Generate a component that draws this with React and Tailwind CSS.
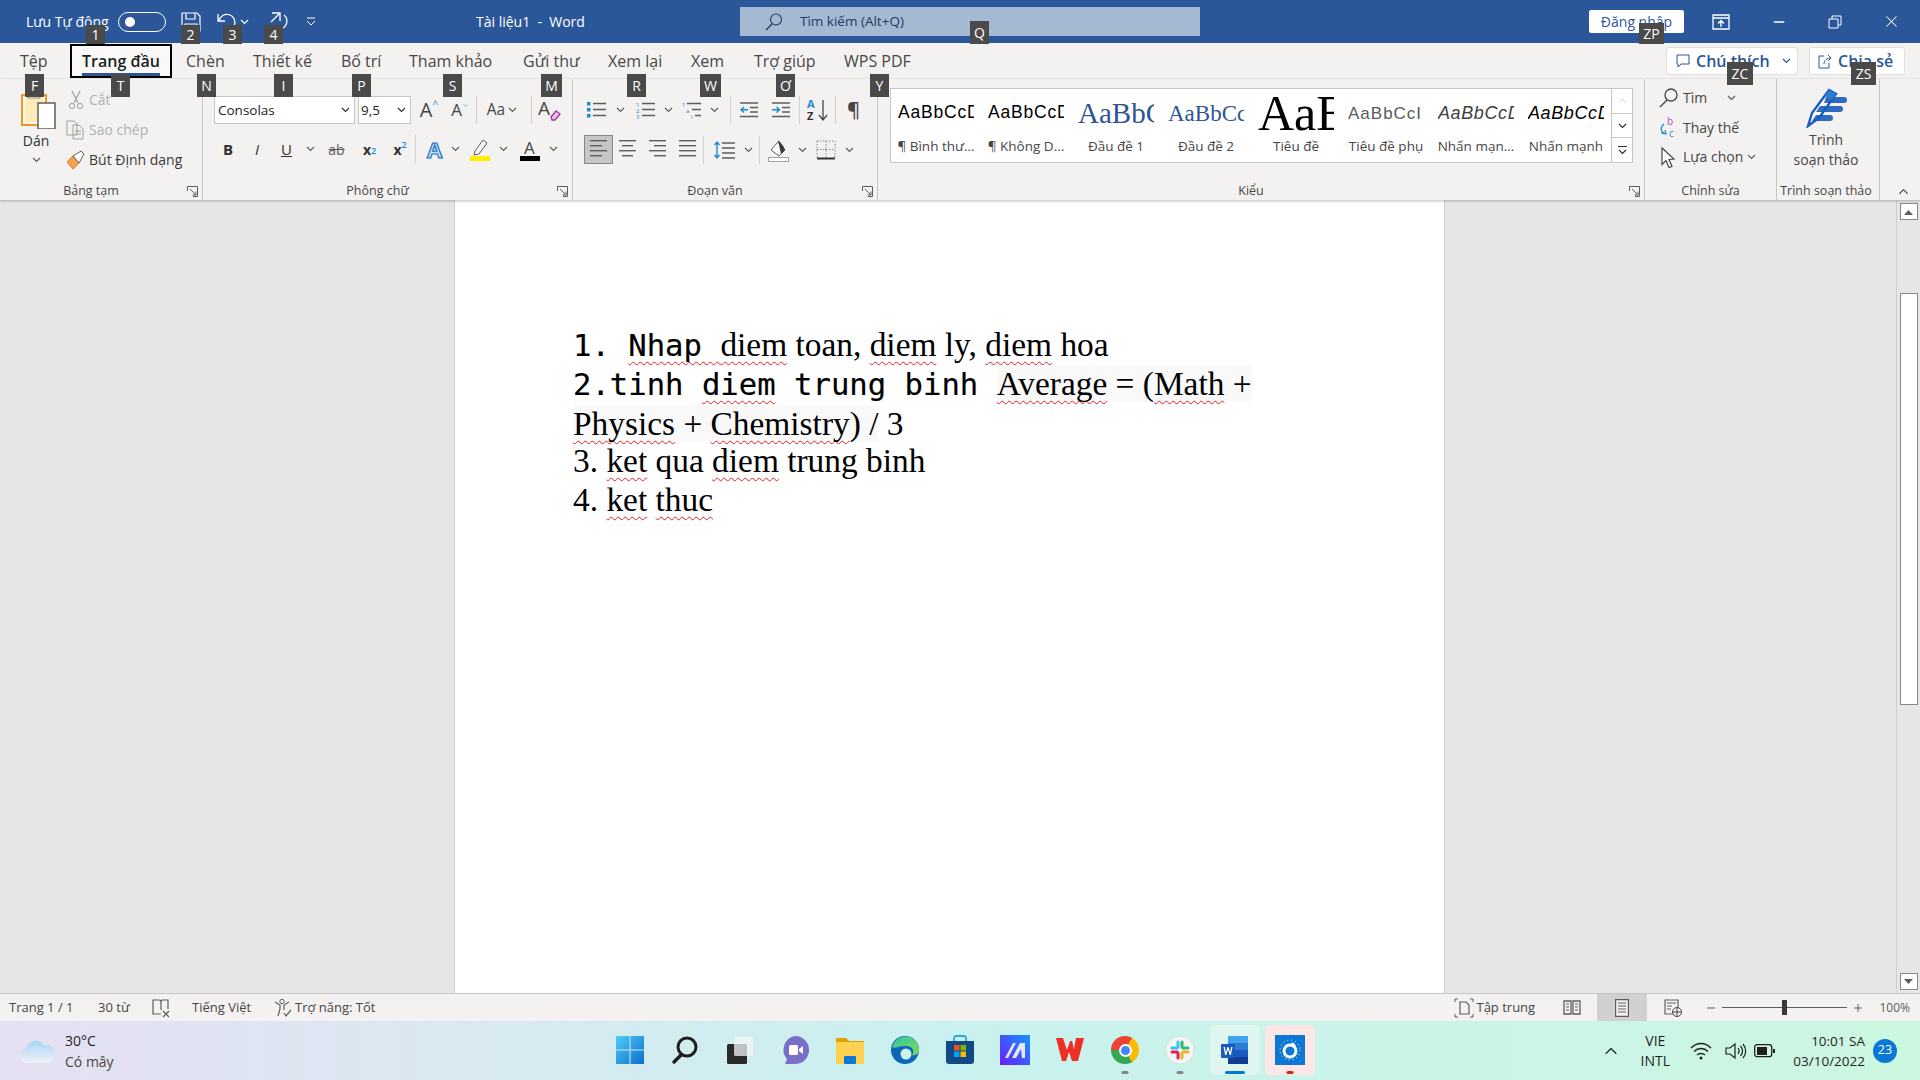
import { ChevronDown, ChevronUp, Minus, X, Plus } from 'lucide-react'

const ui = { fontFamily: '"Open Sans", sans-serif' }

const keyTips = [
  ['1', 'left-[86px] top-[25px] w-[19px] h-[19px]'],
  ['2', 'left-[181px] top-[25px] w-[19px] h-[19px]'],
  ['3', 'left-[223px] top-[25px] w-[19px] h-[19px]'],
  ['4', 'left-[264px] top-[25px] w-[19px] h-[19px]'],
  ['Q', 'left-[970px] top-[21px] w-[19px] h-[23px]'],
  ['ZP', 'left-[1639px] top-[23px] w-[25px] h-[21px]'],
  ['F', 'left-[25px] top-[74px] w-[19px] h-[23px]'],
  ['T', 'left-[111px] top-[74px] w-[19px] h-[23px]'],
  ['N', 'left-[197px] top-[74px] w-[19px] h-[23px]'],
  ['I', 'left-[274px] top-[74px] w-[19px] h-[23px]'],
  ['P', 'left-[352px] top-[74px] w-[19px] h-[23px]'],
  ['S', 'left-[443px] top-[74px] w-[19px] h-[23px]'],
  ['M', 'left-[541px] top-[74px] w-[21px] h-[23px]'],
  ['R', 'left-[627px] top-[74px] w-[19px] h-[23px]'],
  ['W', 'left-[700px] top-[74px] w-[21px] h-[23px]'],
  ['Ơ', 'left-[776px] top-[74px] w-[19px] h-[23px]'],
  ['Y', 'left-[870px] top-[74px] w-[19px] h-[23px]'],
  ['ZC', 'left-[1727px] top-[62px] w-[26px] h-[23px]'],
  ['ZS', 'left-[1851px] top-[62px] w-[25px] h-[23px]'],
]

const tabs = [
  ['Tệp', 'ml-[20px] w-[50px]'],
  ['Chèn', 'ml-[14px] w-[67px]'],
  ['Thiết kế', 'w-[88px]'],
  ['Bố trí', 'w-[68px]'],
  ['Tham khảo', 'w-[114px]'],
  ['Gửi thư', 'w-[85px]'],
  ['Xem lại', 'w-[83px]'],
  ['Xem', 'w-[63px]'],
  ['Trợ giúp', 'w-[90px]'],
  ['WPS PDF', 'w-[90px]'],
]

const styles = [
  { name: '¶ Bình thư...', text: 'AaBbCcD', cls: 'text-[17.5px] text-black tracking-[0.8px]', font: '"Liberation Sans", sans-serif' },
  { name: '¶ Không D...', text: 'AaBbCcD', cls: 'text-[17.5px] text-black tracking-[0.8px]', font: '"Liberation Sans", sans-serif' },
  { name: 'Đầu đề 1', text: 'AaBbC', cls: 'text-[29px] text-[#2f5496]', font: '"Liberation Serif", serif' },
  { name: 'Đầu đề 2', text: 'AaBbCc', cls: 'text-[23px] text-[#2f5496]', font: '"Liberation Serif", serif' },
  { name: 'Tiêu đề', text: 'AaB', cls: 'text-[50px] text-black', font: '"Liberation Serif", serif' },
  { name: 'Tiêu đề phụ', text: 'AaBbCcI', cls: 'text-[17px] text-[#5a5a5a] tracking-[1px]', font: '"Liberation Sans", sans-serif' },
  { name: 'Nhấn mạn...', text: 'AaBbCcD', cls: 'text-[18px] italic text-[#404040] tracking-[0.6px]', font: '"Liberation Sans", sans-serif' },
  { name: 'Nhấn mạnh', text: 'AaBbCcD', cls: 'text-[18px] italic text-black tracking-[0.6px]', font: '"Liberation Sans", sans-serif' },
]

function Chev({ className = 'text-[#605e5c]' }) {
  return (
    <svg width="9" height="6" viewBox="0 0 9 6" className={className}>
      <path d="M1 1l3.5 3.5L8 1" fill="none" stroke="currentColor" strokeWidth="1.2" />
    </svg>
  )
}

function Sep({ className = '' }) {
  return <div className={`w-px h-[28px] bg-[#d2d0ce] ${className}`} />
}

function Launcher() {
  return (
    <svg width="11" height="11" viewBox="0 0 11 11" className="text-[#605e5c]">
      <path d="M.5 5V.5H10.5V10.5H6M3 3l6 6M9 5.5V9H5.5" fill="none" stroke="currentColor" />
    </svg>
  )
}

function Lines({ rows, width = 20, gap = 5 }) {
  return (
    <svg width={width} height={rows.length * gap + 1} className="text-[#605e5c]">
      {rows.map(([a, b], i) => (
        <rect key={i} x={a} y={i * gap + 1} width={b - a} height="1.4" fill="currentColor" />
      ))}
    </svg>
  )
}

function Bullets() {
  return (
    <svg width="20" height="18" viewBox="0 0 20 18">
      <rect x="0" y="1" width="3.5" height="3.5" fill="#1b8ad3" />
      <rect x="0" y="7" width="3.5" height="3.5" fill="#1b8ad3" />
      <rect x="0" y="13" width="3.5" height="3.5" fill="#1b8ad3" />
      <path d="M6 2.5h13M6 8.5h13M6 14.5h13" stroke="#605e5c" strokeWidth="1.4" />
    </svg>
  )
}

function Numbers() {
  return (
    <svg width="20" height="18" viewBox="0 0 20 18">
      <text x="0" y="5.5" fontSize="6" fill="#1b8ad3" fontFamily="Open Sans">1</text>
      <text x="0" y="11.5" fontSize="6" fill="#1b8ad3" fontFamily="Open Sans">2</text>
      <text x="0" y="17.5" fontSize="6" fill="#1b8ad3" fontFamily="Open Sans">3</text>
      <path d="M6 2.5h13M6 8.5h13M6 14.5h13" stroke="#605e5c" strokeWidth="1.4" />
    </svg>
  )
}

function MultiLevel() {
  return (
    <svg width="20" height="18" viewBox="0 0 20 18">
      <text x="0" y="5.5" fontSize="6" fill="#1b8ad3" fontFamily="Open Sans">1</text>
      <text x="4" y="11.5" fontSize="6" fill="#1b8ad3" fontFamily="Open Sans">a</text>
      <text x="9" y="17.5" fontSize="6" fill="#1b8ad3" fontFamily="Open Sans">i</text>
      <path d="M5 2.5h14M10 8.5h9M13 14.5h6" stroke="#605e5c" strokeWidth="1.4" />
    </svg>
  )
}

function Indent({ inc }) {
  return (
    <svg width="20" height="16" viewBox="0 0 20 16">
      <path d="M1 1h18M11 5.5h8M11 10h8M1 14.5h18" stroke="#605e5c" strokeWidth="1.3" />
      {inc ? (
        <path d="M1 7.7h7M5.5 5l3 2.7-3 2.7" fill="none" stroke="#1b8ad3" strokeWidth="1.4" />
      ) : (
        <path d="M9 7.7H2M5 5L2 7.7l3 2.7" fill="none" stroke="#1b8ad3" strokeWidth="1.4" />
      )}
    </svg>
  )
}

function Clipboard() {
  return (
    <svg width="36" height="38" viewBox="0 0 36 38" className="ml-[5px]">
      <rect x="1" y="4" width="24" height="30" fill="#fff8e8" stroke="#e8962e" strokeWidth="2" />
      <rect x="4" y="7" width="18" height="24" fill="#fdebb8" />
      <rect x="7" y="0" width="12" height="7" fill="#fff" stroke="#8a8886" />
      <rect x="17" y="12" width="17" height="26" fill="#fff" stroke="#605e5c" strokeWidth="1.5" />
    </svg>
  )
}

function ClipboardGroup() {
  return (
    <Group className="w-[203px]" label="Bảng tạm">
      <div className="flex">
        <div className="w-[66px] flex flex-col items-center pl-[6px] pt-[12px]">
          <Clipboard />
          <div className="text-[14px] leading-[18px] mt-[3px] text-[#323130]">Dán</div>
          <div className="mt-[7px]"><Chev /></div>
        </div>
        <div className="flex flex-col pt-[6px] text-[14px] leading-[30px]">
          <div className="flex items-center h-[30px] text-[#b3b0ad]">
            <svg width="20" height="20" viewBox="0 0 20 20" className="mr-[3px]">
              <path d="M6 1l6 12M14 1L8 13" stroke="#a19f9d" strokeWidth="1.2" />
              <circle cx="6" cy="16" r="2.6" fill="none" stroke="#a19f9d" />
              <circle cx="14" cy="16" r="2.6" fill="none" stroke="#a19f9d" />
            </svg>
            Cắt
          </div>
          <div className="flex items-center h-[30px] text-[#b3b0ad]">
            <svg width="20" height="20" viewBox="0 0 20 20" className="mr-[3px]">
              <path d="M1 1h7l3 3v11H1zM7 5h6l4 4v10H7z" fill="#f3f2f1" stroke="#a19f9d" />
              <path d="M9 11h6M9 14h6" stroke="#a19f9d" />
            </svg>
            Sao chép
          </div>
          <div className="flex items-center h-[30px] text-[#3b3a39]">
            <svg width="20" height="20" viewBox="0 0 20 20" className="mr-[3px]">
              <path d="M1 12l6-6 6 7-6 6z" fill="#f7a24b" stroke="#d9762a" />
              <path d="M7 6l8-5 3 3-5 9z" fill="#fff" stroke="#605e5c" />
            </svg>
            Bút Định dạng
          </div>
        </div>
      </div>
    </Group>
  )
}

function Group({ className, label, children, launcher = true, sep = true }) {
  return (
    <div className={`relative flex flex-col h-full shrink-0 ${sep ? 'border-r border-[#c8c6c4]' : ''} ${className}`}>
      <div className="flex-1 min-h-0">{children}</div>
      <div className="flex items-center h-[18px]">
        <div className="flex-1 text-center text-[12.5px] leading-[16px] text-[#484644] whitespace-nowrap">{label}</div>
        {launcher && <div className="w-[20px] flex justify-center"><Launcher /></div>}
      </div>
    </div>
  )
}

function Cell({ className = '', children }) {
  return <div className={`flex items-center justify-center h-[28px] shrink-0 ${className}`}>{children}</div>
}

function FontGroup() {
  const serifA = { fontFamily: '"Open Sans", sans-serif' }
  return (
    <Group className="w-[370px]" label="Phông chữ">
      <div className="flex items-center pl-[11px] pt-[17px]">
        <div className="flex items-center justify-between w-[141px] h-[28px] bg-white border border-[#c8c6c4] pl-[3px] pr-[4px] text-[13.5px] text-[#201f1e]">
          Consolas <Chev className="text-[#323130]" />
        </div>
        <div className="ml-[3px] flex items-center justify-between w-[53px] h-[28px] bg-white border border-[#c8c6c4] pl-[2px] pr-[4px] text-[13.5px] text-[#201f1e]">
          9,5 <Chev className="text-[#323130]" />
        </div>
        <Cell className="w-[32px] ml-[2px] text-[20px] text-[#484644] relative" >
          <span style={serifA}>A</span><span className="text-[#1b8ad3] text-[10px] -mt-[12px]">^</span>
        </Cell>
        <Cell className="w-[30px] text-[17px] text-[#484644]">
          <span style={serifA}>A</span><span className="-mt-[10px]"><ChevronDown size={7} className="text-[#1b8ad3]" /></span>
        </Cell>
        <Sep className="ml-[1px]" />
        <Cell className="w-[50px] gap-[3px] text-[15.5px] text-[#484644]">Aa <Chev /></Cell>
        <Sep className="ml-[4px]" />
        <Cell className="w-[33px]">
          <svg width="24" height="24" viewBox="0 0 24 24">
            <text x="1" y="17" fontSize="19" fill="#484644" fontFamily="Open Sans">A</text>
            <path d="M14 19l5-6 4 3-5 6h-3z" fill="#e6c6ea" stroke="#a6359f" strokeWidth="1.3" />
          </svg>
        </Cell>
      </div>
      <div className="flex items-center pl-[11px] mt-[11px]">
        <Cell className="w-[28px] text-[15px] font-bold text-[#323130]">B</Cell>
        <Cell className="w-[30px] text-[15px] italic text-[#323130]" >I</Cell>
        <Cell className="w-[29px] text-[15px] underline text-[#323130]">U</Cell>
        <Cell className="w-[18px]"><Chev /></Cell>
        <Cell className="w-[35px] text-[14px] line-through text-[#605e5c]">ab</Cell>
        <Cell className="w-[31px] text-[14px] font-bold text-[#323130]">x<sub className="text-[#1b8ad3] text-[9px] font-semibold">2</sub></Cell>
        <Cell className="w-[30px] text-[14px] font-bold text-[#323130]">x<sup className="text-[#1b8ad3] text-[9px] font-semibold">2</sup></Cell>
        <Sep />
        <Cell className="w-[31px] ml-[3px]">
          <span className="text-[22px] font-bold leading-none text-[#bfe0f5] [-webkit-text-stroke:1.2px_#1b6fc2]">A</span>
        </Cell>
        <Cell className="w-[10px]"><Chev /></Cell>
        <Cell className="w-[33px] ml-[3px]">
          <svg width="24" height="24" viewBox="0 0 24 24">
            <path d="M7 14l8-11 4 3-8 11-5 1z" fill="#f3f2f1" stroke="#605e5c" />
            <rect x="2" y="19" width="20" height="5" fill="#ffee00" />
          </svg>
        </Cell>
        <Cell className="w-[14px]"><Chev /></Cell>
        <Cell className="w-[34px] ml-[3px] relative">
          <svg width="24" height="24" viewBox="0 0 24 24">
            <text x="6" y="17" fontSize="17" fill="#484644" fontFamily="Open Sans">A</text>
            <rect x="2" y="19" width="20" height="5" fill="#000" />
          </svg>
        </Cell>
        <Cell className="w-[12px]"><Chev /></Cell>
      </div>
    </Group>
  )
}

function ParagraphGroup() {
  return (
    <Group className="w-[305px]" label="Đoạn văn">
      <div className="flex items-center pl-[13px] pt-[17px]">
        <Cell className="w-[22px]"><Bullets /></Cell>
        <Cell className="w-[24px]"><Chev /></Cell>
        <Cell className="w-[27px]"><Numbers /></Cell>
        <Cell className="w-[19px]"><Chev /></Cell>
        <Cell className="w-[28px]"><MultiLevel /></Cell>
        <Cell className="w-[16px]"><Chev /></Cell>
        <Sep className="ml-[8px]" />
        <Cell className="w-[35px]"><Indent /></Cell>
        <Cell className="w-[29px]"><Indent inc /></Cell>
        <Sep className="ml-[4px]" />
        <Cell className="w-[35px]">
          <svg width="24" height="24" viewBox="0 0 24 24">
            <text x="1" y="10" fontSize="11" fontWeight="700" fill="#1b8ad3" fontFamily="Open Sans">A</text>
            <text x="1" y="22" fontSize="11" fontWeight="700" fill="#323130" fontFamily="Open Sans">Z</text>
            <path d="M17 2v19M13 17l4 5 4-5" fill="none" stroke="#484644" strokeWidth="1.3" />
          </svg>
        </Cell>
        <Sep />
        <Cell className="w-[35px] text-[20px] font-semibold text-[#484644]">¶</Cell>
      </div>
      <div className="flex items-center pl-[11px] mt-[11px]">
        <Cell className="w-[29px] h-[29px] bg-[#c8c6c4] border border-[#8a8886]">
          <Lines rows={[[0, 17], [0, 12], [0, 17], [0, 12]]} width={18} gap={5} />
        </Cell>
        <Cell className="w-[30px]"><Lines rows={[[0, 17], [3, 14], [0, 17], [3, 14]]} width={18} /></Cell>
        <Cell className="w-[30px]"><Lines rows={[[0, 17], [5, 17], [0, 17], [5, 17]]} width={18} /></Cell>
        <Cell className="w-[30px]"><Lines rows={[[0, 17], [0, 17], [0, 17], [0, 17]]} width={18} /></Cell>
        <Sep />
        <Cell className="w-[32px] ml-[5px]">
          <svg width="22" height="20" viewBox="0 0 22 20">
            <path d="M3 2v16M.5 5L3 2l2.5 3M.5 15L3 18l2.5-3" fill="none" stroke="#1b8ad3" strokeWidth="1.4" />
            <path d="M8 3h13M8 8h13M8 13h13M8 18h13" stroke="#605e5c" strokeWidth="1.4" />
          </svg>
        </Cell>
        <Cell className="w-[14px]"><Chev /></Cell>
        <Sep className="ml-[4px]" />
        <Cell className="w-[33px] ml-[2px]">
          <svg width="22" height="24" viewBox="0 0 22 24">
            <path d="M3 12l7-8 7 8-6 6z" fill="#fff" stroke="#605e5c" />
            <path d="M10 2c3 3 6 6 7 10l-4 4z" fill="#3b3a39" />
            <rect x=".5" y="19.5" width="20" height="4" fill="#fff" stroke="#a19f9d" />
          </svg>
        </Cell>
        <Cell className="w-[14px]"><Chev /></Cell>
        <Cell className="w-[33px]">
          <svg width="20" height="20" viewBox="0 0 20 20">
            <path d="M1 1h18M1 1v17M19 1v17M10 1v17M1 9.5h18" stroke="#8a8886" strokeDasharray="1.5 1.5" fill="none" />
            <path d="M1 18.5h18" stroke="#323130" strokeWidth="2" />
          </svg>
        </Cell>
        <Cell className="w-[14px]"><Chev /></Cell>
      </div>
    </Group>
  )
}

function StylesGroup() {
  return (
    <Group className="w-[767px]" label="Kiểu">
      <div className="pl-[12px] pt-[9px]">
        <div className="flex w-[743px] h-[75px] bg-white border border-[#c8c6c4]">
          {styles.map((s) => (
            <div key={s.name} className="w-[90px] shrink-0 flex flex-col items-center">
              <div className="w-[76px] h-[48px] overflow-hidden flex items-center justify-start whitespace-nowrap">
                <span className={`leading-none ${s.cls}`} style={{ fontFamily: s.font }}>{s.text}</span>
              </div>
              <div className="text-[13.5px] leading-[18px] text-[#484644] whitespace-nowrap">{s.name}</div>
            </div>
          ))}
          <div className="ml-auto w-[21px] flex flex-col border-l border-[#c8c6c4]">
            <div className="flex-1 flex items-center justify-center text-[#c8c6c4]"><ChevronUp size={11} /></div>
            <div className="flex-1 flex items-center justify-center border-y border-[#c8c6c4] text-[#323130]"><Chev className="text-[#323130]" /></div>
            <div className="flex-1 flex flex-col items-center justify-center text-[#323130]">
              <div className="w-[9px] h-px bg-[#323130] mb-[2px]" />
              <Chev className="text-[#323130]" />
            </div>
          </div>
        </div>
      </div>
    </Group>
  )
}

function EditingGroup() {
  return (
    <Group className="w-[132px]" label="Chỉnh sửa" launcher={false}>
      <div className="flex flex-col pt-[4px] pl-[13px] text-[14px] text-[#484644]">
        <div className="flex items-center h-[29.5px]">
          <svg width="22" height="22" viewBox="0 0 22 22">
            <circle cx="13" cy="8" r="6" fill="none" stroke="#484644" strokeWidth="1.3" />
            <path d="M9 13l-7 7" stroke="#484644" strokeWidth="1.5" />
          </svg>
          <span className="ml-[3px] w-[44px]">Tìm</span>
          <Chev />
        </div>
        <div className="flex items-center h-[29.5px]">
          <svg width="22" height="22" viewBox="0 0 22 22">
            <text x="9" y="9" fontSize="10" fill="#b146c2" fontFamily="Open Sans">b</text>
            <text x="11" y="21" fontSize="10" fill="#1b8ad3" fontFamily="Open Sans">c</text>
            <path d="M6 8C2 11 2 16 8 18M3 17l5 1-1-4" fill="none" stroke="#1b8ad3" strokeWidth="1.2" />
          </svg>
          <span className="ml-[3px]">Thay thế</span>
        </div>
        <div className="flex items-center h-[29.5px]">
          <svg width="22" height="22" viewBox="0 0 22 22">
            <path d="M4 2l12 11-5 .5 3 7-3 1-3-7-4 4z" fill="#fff" stroke="#484644" strokeWidth="1.2" />
          </svg>
          <span className="ml-[3px] mr-[4px]">Lựa chọn</span>
          <Chev />
        </div>
      </div>
    </Group>
  )
}

function EditorGroup() {
  return (
    <Group className="w-[103px] pr-[4px]" label="Trình soạn thảo" launcher={false}>
      <div className="flex flex-col items-center pt-[9px]">
        <svg width="42" height="40" viewBox="0 0 42 40">
          <path d="M3 38l4-13L24 2l7 4-17 24z" fill="#fff" stroke="#185abd" strokeWidth="2.4" />
          <path d="M21 9h18a2 2 0 010 6H19zM15 18h20a2 2 0 010 6H11zM11 27h14a2 2 0 010 6H7z" fill="#185abd" opacity=".9" />
          <path d="M24 2l7 4-4 6-7-4z" fill="#2b7cd3" />
        </svg>
        <div className="text-[14px] leading-[20px] mt-[2px] text-center text-[#484644]">Trình<br />soạn thảo</div>
      </div>
    </Group>
  )
}

function Sq({ children }) {
  return <span className="underline decoration-wavy decoration-[#ea1c24] decoration-1 underline-offset-[5px] [text-decoration-skip-ink:none]">{children}</span>
}

function Mono({ children }) {
  return <span className="text-[30.6px] [-webkit-text-stroke:0.2px_black]" style={{ fontFamily: '"DejaVu Sans Mono", monospace' }}>{children}</span>
}

function Document() {
  return (
    <div className="flex-1 min-h-0 flex bg-[#e6e6e6]">
      <div className="flex-1 flex justify-center pl-[3px]">
        <div className="w-[991px] h-full bg-white border-x border-[#d2d0ce] px-[118px] pt-[126px] text-black">
          <div className="text-[33.4px] leading-[38.8px]" style={{ fontFamily: '"Liberation Serif", serif' }}>
            <div className="h-[38.8px]"><Mono>1. </Mono> <Sq><Mono>Nhap </Mono></Sq> <Sq>diem</Sq> toan, <Sq>diem</Sq> ly, <Sq>diem</Sq> hoa</div>
            <div className="h-[77.6px]">
              <Mono>2.tinh <Sq>diem</Sq> trung binh </Mono>
              {' '}
              <span className="bg-[#f9f9f9]"><Sq>Average</Sq> = (<Sq>Math</Sq> + <Sq>Physics</Sq> + <Sq>Chemistry</Sq>) /</span> 3
            </div>
            <div className="h-[38.8px]">3. <Sq>ket</Sq> qua <Sq>diem</Sq> trung binh</div>
            <div className="h-[38.8px]">4. <Sq>ket</Sq> <Sq>thuc</Sq></div>
          </div>
        </div>
      </div>
      <div className="w-[24px] flex flex-col items-center pt-[3px] pb-[3px] bg-[#e6e6e6] border-l border-[#d2d0ce]">
        <div className="w-[18px] h-[17px] bg-white border border-[#8a8886] flex items-center justify-center">
          <svg width="9" height="6"><path d="M0 6l4.5-5L9 6z" fill="#605e5c" /></svg>
        </div>
        <div className="w-[18px] h-[412px] mt-[73px] bg-white border border-[#8a8886]" />
        <div className="mt-auto w-[18px] h-[17px] bg-white border border-[#8a8886] flex items-center justify-center">
          <svg width="9" height="6"><path d="M0 0l4.5 5L9 0z" fill="#605e5c" /></svg>
        </div>
      </div>
    </div>
  )
}

function StatusBar() {
  return (
    <div className="flex items-center h-[28px] shrink-0 bg-[#f3f2f1] border-t border-[#c8c6c4] text-[13px] text-[#484644] whitespace-nowrap">
      <span className="ml-[9px] w-[89px]">Trang 1 / 1</span>
      <span className="w-[53px]">30 từ</span>
      <svg width="20" height="20" viewBox="0 0 20 20">
        <path d="M10 16H2V2h7l1 2 1-2h6v9M10 4v8" fill="none" stroke="#605e5c" strokeWidth="1.2" />
        <path d="M12 13l6 6M18 13l-6 6" stroke="#605e5c" strokeWidth="1.2" />
      </svg>
      <span className="ml-[21px] w-[81px]">Tiếng Việt</span>
      <svg width="20" height="20" viewBox="0 0 20 20">
        <circle cx="9" cy="3.5" r="2.2" fill="none" stroke="#605e5c" />
        <path d="M2 4l5 3v4l-2 7M16 4l-5 3v5M11 15l2 3 5-6" fill="none" stroke="#605e5c" strokeWidth="1.2" />
      </svg>
      <span className="ml-[2px]">Trợ năng: Tốt</span>
      <div className="flex-1" />
      <svg width="20" height="20" viewBox="0 0 20 20" className="mr-[2px]">
        <path d="M6 4h6l3 3v9H6z" fill="none" stroke="#605e5c" strokeWidth="1.2" />
        <path d="M1 4V1h3M16 1h3v3M19 16v3h-3M4 19H1v-3" fill="none" stroke="#605e5c" />
      </svg>
      <span className="w-[87px]">Tập trung</span>
      <svg width="18" height="16" viewBox="0 0 18 16">
        <path d="M1 1h7v13H1zM10 1h7v13h-7z" fill="none" stroke="#605e5c" strokeWidth="1.3" />
        <path d="M3 4h3M3 7h3M3 10h3M12 4h3M12 7h3M12 10h3" stroke="#605e5c" />
      </svg>
      <div className="ml-[16px] w-[50px] h-full bg-[#d0d0d0] flex items-center justify-center">
        <svg width="14" height="18" viewBox="0 0 14 18">
          <path d="M.6.6h12.800v16.800H.6z" fill="#f3f2f1" stroke="#605e5c" strokeWidth="1.2" />
          <path d="M3 4h8M3 7h8M3 10h8M3 13h8" stroke="#605e5c" />
        </svg>
      </div>
      <svg width="18" height="18" viewBox="0 0 18 18" className="ml-[17px]">
        <path d="M1 1h13v14H1zM3 4h9M3 7h5M3 10h4" fill="none" stroke="#605e5c" strokeWidth="1.2" />
        <circle cx="13" cy="13" r="4.5" fill="#f3f2f1" stroke="#484644" />
        <path d="M8.5 13h9M13 8.5v9" stroke="#484644" />
      </svg>
      <Minus size={12} className="ml-[23px] text-[#605e5c]" />
      <div className="relative ml-[5px] w-[125px] h-px bg-[#605e5c]">
        <div className="absolute left-[60px] -top-[7px] w-[5px] h-[15px] bg-[#3b3a39]" />
      </div>
      <Plus size={12} className="ml-[5px] text-[#605e5c]" />
      <span className="ml-[15px] mr-[10px] text-[12px] text-[#605e5c]">100%</span>
    </div>
  )
}

function TaskIcon({ children, className = '', dot }) {
  return (
    <div className={`relative w-[50px] h-[50px] mr-[5px] flex items-center justify-center rounded-[5px] ${className}`}>
      {children}
      {dot && <div className={`absolute bottom-[1px] left-1/2 -translate-x-1/2 h-[3px] rounded-full ${dot}`} />}
    </div>
  )
}

function TaskIcons() {
  return (
    <div className="absolute left-[605px] top-[4px] flex">
      <TaskIcon>
        <svg width="30" height="30" viewBox="0 0 30 30">
          <defs>
            <linearGradient id="win" x1="0" y1="0" x2="1" y2="1"><stop offset="0" stopColor="#4fcdf7" /><stop offset="1" stopColor="#0a6fcb" /></linearGradient>
          </defs>
          <path d="M1 1h13.5v13.5H1zM15.5 1H29v13.5H15.5zM1 15.5h13.5V29H1zM15.5 15.5H29V29H15.5z" fill="url(#win)" />
        </svg>
      </TaskIcon>
      <TaskIcon>
        <svg width="30" height="30" viewBox="0 0 30 30">
          <circle cx="17" cy="12" r="9" fill="none" stroke="#1f1f1f" strokeWidth="3" />
          <path d="M11 20l-7 7" stroke="#1f1f1f" strokeWidth="3.4" strokeLinecap="round" />
        </svg>
      </TaskIcon>
      <TaskIcon>
        <svg width="30" height="30" viewBox="0 0 30 30">
          <rect x="2" y="9" width="20" height="20" rx="1.5" fill="#2a2a2a" />
          <rect x="9" y="2" width="19" height="19" rx="1.5" fill="#f4f4f4" opacity=".75" />
        </svg>
      </TaskIcon>
      <TaskIcon>
        <svg width="30" height="30" viewBox="0 0 30 30">
          <path d="M15 1a14 14 0 110 28H5l2-5A14 14 0 0115 1z" fill="#7a6fc8" />
          <rect x="9" y="10" width="9" height="10" rx="1.5" fill="#fff" />
          <path d="M19 14l4-3v8l-4-3z" fill="#fff" />
        </svg>
      </TaskIcon>
      <TaskIcon>
        <svg width="30" height="30" viewBox="0 0 30 30">
          <path d="M1 3h10l3 3h15v23H1z" fill="#e0a100" />
          <rect x="1" y="7" width="28" height="22" rx="1" fill="#ffd34f" />
          <rect x="9" y="21" width="12" height="8" rx="1" fill="#0f78d4" />
        </svg>
      </TaskIcon>
      <TaskIcon>
        <svg width="30" height="30" viewBox="0 0 30 30">
          <defs>
            <linearGradient id="edge" x1="0" y1="0" x2="1" y2="1"><stop offset="0" stopColor="#30c7a0" /><stop offset="1" stopColor="#7ed957" /></linearGradient>
          </defs>
          <circle cx="15" cy="15" r="14" fill="#0d66b8" />
          <path d="M2 12C5 3 13 0 19 2c7 2 10 8 10 13 0 3-3 6-7 5 3-3 1-9-6-9-7 0-11 3-14 1z" fill="url(#edge)" />
          <circle cx="16" cy="19" r="5.5" fill="#cdf3ea" />
        </svg>
      </TaskIcon>
      <TaskIcon>
        <svg width="30" height="30" viewBox="0 0 30 30">
          <path d="M9 6V3a2 2 0 012-2h8a2 2 0 012 2v3" fill="none" stroke="#27a7e0" strokeWidth="1.8" />
          <path d="M1 6h28v20a3 3 0 01-3 3H4a3 3 0 01-3-3z" fill="#124a86" />
          <rect x="9" y="10" width="5.5" height="5.5" fill="#f25022" />
          <rect x="15.5" y="10" width="5.5" height="5.5" fill="#7fba00" />
          <rect x="9" y="16.5" width="5.5" height="5.5" fill="#00a4ef" />
          <rect x="15.5" y="16.5" width="5.5" height="5.5" fill="#ffb900" />
        </svg>
      </TaskIcon>
      <TaskIcon>
        <svg width="30" height="30" viewBox="0 0 30 30">
          <defs>
            <linearGradient id="mm" x1="0" y1="1" x2="1" y2="0"><stop offset="0" stopColor="#6a1cff" /><stop offset="1" stopColor="#1496ff" /></linearGradient>
          </defs>
          <rect x="0" y="0" width="30" height="30" fill="url(#mm)" />
          <path d="M5 23L13 8h3L8 23zM12 23l8-15h5v15h-3l-1-9-5 9z" fill="#e8e6ff" />
        </svg>
      </TaskIcon>
      <TaskIcon>
        <svg width="30" height="30" viewBox="0 0 30 30">
          <path d="M1 3h7l4 12 3-9h2l2 8 2-11h8l-6 23h-6l-3-9-3 9H7z" fill="#ef2f24" />
        </svg>
      </TaskIcon>
      <TaskIcon dot="w-[7px] bg-[#7a8a85]">
        <div className="w-[28px] h-[28px] rounded-full" style={{ background: 'conic-gradient(from 30deg, #fbbc04 0 120deg, #34a853 120deg 240deg, #ea4335 240deg 360deg)' }}>
          <div className="w-[13px] h-[13px] mt-[7.5px] ml-[7.5px] inline-block rounded-full bg-[#4285f4] border-2 border-white" />
        </div>
      </TaskIcon>
      <TaskIcon dot="w-[7px] bg-[#7a8a85]">
        <svg width="30" height="30" viewBox="0 0 30 30">
          <circle cx="15" cy="15" r="14" fill="#f3f6f4" stroke="#d8dedb" />
          <path d="M13 7v5M7 13h5" stroke="#36c5f0" strokeWidth="3" strokeLinecap="round" />
          <path d="M17 7v5M18 13h5" stroke="#2eb67d" strokeWidth="3" strokeLinecap="round" />
          <path d="M13 18v5M7 17h5" stroke="#e01e5a" strokeWidth="3" strokeLinecap="round" />
          <path d="M17 18v5M18 17h5" stroke="#ecb22e" strokeWidth="3" strokeLinecap="round" />
        </svg>
      </TaskIcon>
      <TaskIcon className="bg-[#dff5f0]" dot="w-[20px] bg-[#0078d4]">
        <svg width="30" height="30" viewBox="0 0 30 30">
          <path d="M8 1h20v7H8z" fill="#41a5ee" />
          <path d="M8 8h20v7H8z" fill="#2b7cd3" />
          <path d="M8 15h20v7H8z" fill="#185abd" />
          <path d="M8 22h20v7H8z" fill="#103f91" />
          <rect x="1" y="9" width="14" height="14" rx="1" fill="#185abd" />
          <path d="M3.5 12l1.6 8h1.2L8 14.5 9.7 20h1.2l1.6-8h-1.4l-.9 5.2L8.5 12h-1L5.8 17.2 4.9 12z" fill="#fff" />
        </svg>
      </TaskIcon>
      <TaskIcon className="bg-[#fde6e6]" dot="w-[7px] bg-[#c42b1c]">
        <svg width="30" height="30" viewBox="0 0 30 30">
          <rect width="30" height="30" fill="#0a78d4" />
          <circle cx="15" cy="16" r="6" fill="none" stroke="#fff" strokeWidth="3" />
          <path d="M17 8l3 3" stroke="#fff" strokeWidth="2.4" />
          <circle cx="15" cy="15" r="10" fill="none" stroke="#fff" strokeWidth="1" strokeDasharray="1 3" />
        </svg>
      </TaskIcon>
    </div>
  )
}

function Taskbar() {
  return (
    <div className="relative h-[59px] shrink-0 flex items-center bg-gradient-to-r from-[#e6e0f3] via-[#c9f1ef] to-[#ccf7e0] text-[14px] text-[#1f1f1f] whitespace-nowrap">
      <svg width="36" height="26" viewBox="0 0 36 26" className="ml-[20px]">
        <defs>
          <linearGradient id="cl" x1="0" y1="0" x2="0" y2="1"><stop offset="0" stopColor="#a9d4f5" /><stop offset="1" stopColor="#eef3f7" /></linearGradient>
        </defs>
        <path d="M8 25a7 7 0 01-2-14A10 10 0 0124 7a8 8 0 014 18z" fill="url(#cl)" />
      </svg>
      <div className="ml-[9px] leading-[21px]">
        <div>30°C</div>
        <div className="text-[#484644]">Có mây</div>
      </div>
      <TaskIcons />
      <div className="flex-1" />
      <ChevronUp size={20} strokeWidth={1.3} />
      <div className="ml-[14px] w-[40px] text-center leading-[20px] text-[14px]">VIE<br />INTL</div>
      <svg width="22" height="18" viewBox="0 0 22 18" className="ml-[15px]">
        <path d="M1 6c6-6 14-6 20 0M4 9.5c4-4 10-4 14 0M7 13c2-2 6-2 8 0" fill="none" stroke="#1f1f1f" strokeWidth="1.3" />
        <circle cx="11" cy="16" r="1.5" fill="#1f1f1f" />
      </svg>
      <svg width="22" height="20" viewBox="0 0 22 20" className="ml-[13px]">
        <path d="M1 7h4l5-4v14l-5-4H1zM13 7c1.5 2 1.5 4 0 6M15.5 5c2.500 3 2.500 7 0 10M18 3c3.500 4 3.500 10 0 14" fill="none" stroke="#1f1f1f" strokeWidth="1.2" />
      </svg>
      <svg width="22" height="14" viewBox="0 0 22 14" className="ml-[7px]">
        <rect x=".7" y=".7" width="17" height="12" rx="2.500" fill="none" stroke="#1f1f1f" strokeWidth="1.3" />
        <rect x="3" y="3" width="10" height="8" fill="#1f1f1f" />
        <rect x="19" y="5" width="2" height="4" fill="#1f1f1f" />
      </svg>
      <div className="ml-[17px] text-right leading-[20px] text-[13.5px]">10:01 SA<br />03/10/2022</div>
      <div className="ml-[8px] mr-[23px] w-[24px] h-[24px] rounded-full bg-[#0a78d4] text-white text-[12.5px] flex items-center justify-center">23</div>
    </div>
  )
}

function TitleBar() {
  return (
    <div className="flex items-center h-[43px] bg-[#2b579a] text-white text-[14px] whitespace-nowrap shrink-0">
      <span className="ml-[26px] w-[92px]">Lưu Tự động</span>
      <div className="w-[48px] h-[20px] rounded-full border border-white flex items-center pl-[6px]">
        <div className="w-[10px] h-[10px] rounded-full bg-white" />
      </div>
      <svg width="20" height="20" viewBox="0 0 20 20" className="ml-[15px]">
        <path d="M1 1h15l3 3v15H1zM5 1v6h9V1M4 19v-7h12v7" fill="none" stroke="#fff" strokeWidth="1.2" />
      </svg>
      <svg width="22" height="20" viewBox="0 0 22 20" className="ml-[15px]">
        <path d="M2 2v7h7M3 9a8 8 0 1 1 15 5" fill="none" stroke="#fff" strokeWidth="1.3" />
      </svg>
      <Chev className="ml-[2px] text-white" />
      <svg width="22" height="20" viewBox="0 0 22 20" className="ml-[20px]">
        <path d="M3 1h8v8M11 1L2 10M15 3c4 3 4 10-1 13" fill="none" stroke="#fff" strokeWidth="1.3" />
      </svg>
      <svg width="10" height="10" viewBox="0 0 10 10" className="ml-[15px]">
        <path d="M1 1h8M1 4l4 4 4-4" fill="none" stroke="#fff" />
      </svg>
      <span className="ml-[160px] w-[264px]">Tài liệu1&nbsp;&nbsp;-&nbsp;&nbsp;Word</span>
      <div className="flex items-center w-[460px] h-[29px] bg-[#a5b9d3] text-[#1f3a63] text-[13.5px]">
        <svg width="20" height="20" viewBox="0 0 20 20" className="ml-[24px]">
          <circle cx="12" cy="7.5" r="5.500" fill="none" stroke="#1f3a63" strokeWidth="1.1" />
          <path d="M8 12l-6 6" stroke="#1f3a63" strokeWidth="1.3" />
        </svg>
        <span className="ml-[16px]">Tìm kiếm (Alt+Q)</span>
      </div>
      <div className="flex-1" />
      <div className="w-[95px] h-[23px] bg-white rounded-[2px] text-[#2b579a] flex items-center justify-center text-[14px]">Đăng nhập</div>
      <svg width="18" height="16" viewBox="0 0 18 16" className="ml-[28px]">
        <path d="M1 1h16v14H1zM1 4h16M9 13V7M6 9.500l3-3 3 3" fill="none" stroke="#fff" strokeWidth="1.3" />
      </svg>
      <Minus size={16} className="ml-[41px] text-white" />
      <svg width="14" height="14" viewBox="0 0 14 14" className="ml-[41px]">
        <path d="M1 4h9v9H1zM4 4V1h9v9h-3" fill="none" stroke="#fff" />
      </svg>
      <X size={19} strokeWidth={1.3} className="ml-[40px] mr-[19px] text-white" />
    </div>
  )
}

function TabRow() {
  return (
    <div className="flex items-center h-[36px] bg-[#f3f2f1] text-[16px] text-[#484644] whitespace-nowrap shrink-0">
      <span className={tabs[0][1]}>{tabs[0][0]}</span>
      <div className="relative w-[102px] h-[34px] border-2 border-black bg-[#faf9f8] flex items-center justify-center font-semibold text-[#201f1e]">
        Trang đầu
        <div className="absolute left-[10px] right-[10px] bottom-[0px] h-[3px] bg-[#2b579a]" />
      </div>
      {tabs.slice(1).map(([t, c]) => (
        <span key={t} className={c}>{t}</span>
      ))}
      <div className="flex-1" />
      <div className="flex items-center w-[132px] h-[28px] bg-white border border-[#e1dfdd] rounded-[3px] text-[#2b579a] font-semibold pl-[9px]">
        <svg width="14" height="14" viewBox="0 0 14 14" className="mr-[6px]">
          <path d="M1 1h12v9H5l-3 3v-3H1z" fill="none" stroke="#2b579a" />
        </svg>
        <span className="w-[82px] text-[16px]">Chú thích</span>
        <Chev className="ml-[4px] text-[#2b579a]" />
      </div>
      <div className="flex items-center w-[96px] h-[28px] ml-[11px] mr-[15px] bg-white border border-[#e1dfdd] rounded-[3px] text-[#2b579a] font-semibold pl-[8px]">
        <svg width="15" height="15" viewBox="0 0 15 15" className="mr-[5px]">
          <path d="M6 2H1v12h10V9M6 10c0-4 3-6 7-6M10 1l3 3-3 3" fill="none" stroke="#2b579a" />
        </svg>
        <span className="text-[16px]">Chia sẻ</span>
      </div>
    </div>
  )
}

export default function App() {
  return (
    <div className="relative w-[1920px] h-[1080px] overflow-hidden flex flex-col bg-white" style={ui}>
      <TitleBar />
      <TabRow />
      <div className="relative flex items-stretch h-[121px] bg-[#f3f2f1] text-[#484644] shrink-0 shadow-[0_1px_3px_rgba(0,0,0,0.25)] z-10">
        <ClipboardGroup />
        <FontGroup />
        <ParagraphGroup />
        <StylesGroup />
        <EditingGroup />
        <EditorGroup />
        <ChevronUp size={15} className="absolute right-[9px] bottom-[1px] text-[#484644]" />
      </div>
      <Document />
      <StatusBar />
      <Taskbar />
      {keyTips.map(([t, c]) => (
        <div key={t} className={`absolute z-20 flex items-center justify-center bg-[#4a4a4a] text-white text-[14px] ${c}`}>{t}</div>
      ))}
    </div>
  )
}
